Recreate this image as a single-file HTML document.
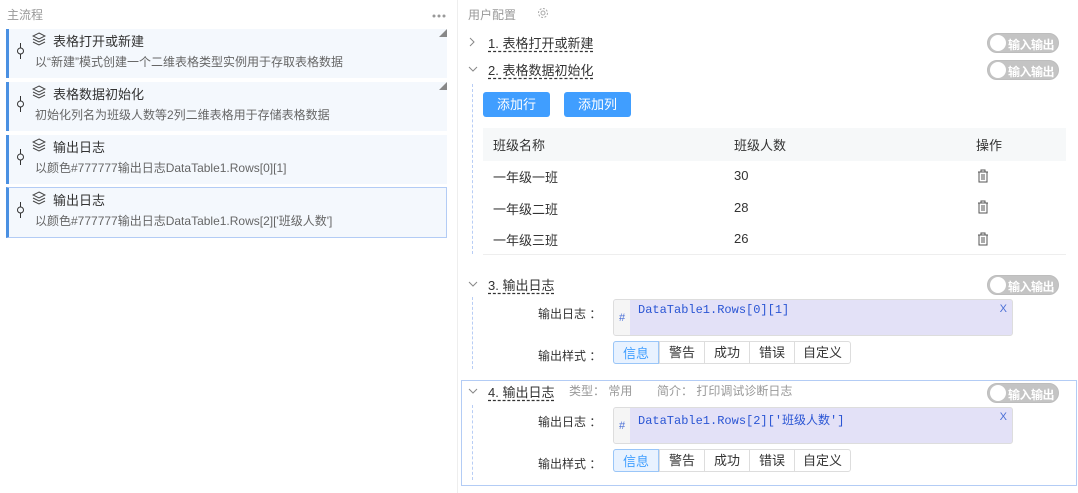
<!DOCTYPE html>
<html><head><meta charset="utf-8"><style>
*{box-sizing:border-box;margin:0;padding:0}
body{width:1078px;height:493px;background:#fff;font-family:"Liberation Sans","Noto Sans CJK SC",sans-serif;font-size:12px;color:#333;position:relative;overflow:hidden}
.a{position:absolute;white-space:nowrap}
.card{position:absolute;left:6px;width:441px;background:#f4f8fd;border-left:3px solid #4a90e2}
.card .t{position:absolute;left:44px;top:2px;font-size:13px;color:#333}
.card .d{position:absolute;left:26px;top:24px;font-size:12px;color:#666}
.card .ic{position:absolute;left:23px;top:3px}
.card .pin{position:absolute;left:7px;top:14px;width:9px;height:16px}
.tri{position:absolute;right:0;top:0;width:0;height:0;border-left:8px solid transparent;border-top:8px solid #888;transform:scaleY(-1)}
.step{position:absolute;left:488px;font-size:13px;color:#333;text-decoration:underline dashed;text-underline-offset:3px}
.chev{position:absolute;left:468px}
.tog{position:absolute;left:987px;width:72px;height:20px;border-radius:10px;background:#c4c4c4;border:1px solid #bdbdbd}
.tog:before{content:"";position:absolute;left:2px;top:1px;width:16px;height:16px;border-radius:50%;background:#fff}
.tog span{position:absolute;left:20px;top:2px;color:#fff;font-size:12px;font-weight:bold;letter-spacing:-0.5px}
.btn{position:absolute;top:92px;width:67px;height:25px;background:#409eff;color:#fff;border-radius:3px;text-align:center;line-height:25px;font-size:13px}
.lbl{position:absolute;left:538px;font-size:12px;color:#333}
.ta{position:absolute;left:613px;width:400px;height:37px;border:1px solid #ddd;border-radius:3px;background:#e3e1f7;overflow:hidden}
.ta .h{position:absolute;left:0;top:0;width:16px;height:100%;background:#f5f5f5;color:#4a6fd6;font-size:11px;text-align:center;padding-top:12px}
.ta .c{position:absolute;left:24px;top:3px;font-family:"Liberation Mono","Noto Sans CJK SC",monospace;color:#2a55d4;font-size:12px}
.ta .x{position:absolute;right:5px;top:3px;color:#4a6fd6;font-size:11px}
.seg{position:absolute;left:613px;height:23px;display:flex;border:1px solid #ddd;border-radius:3px;background:#fff}
.seg div{height:21px;line-height:21px;text-align:center;font-size:13px;color:#333;border-left:1px solid #ddd}
.seg div:first-child{border-left:none;background:#e8f2ff;color:#409eff;border:1px solid #9ac6f8;margin:-1px 0 -1px -1px;height:23px;line-height:23px;border-radius:3px 0 0 3px}
.dash{position:absolute;left:472px;border-left:1px dashed #b8cdf5}
</style></head><body>
<div class="a" style="left:7px;top:6px;color:#999;font-size:12px">主流程</div>
<svg class="a" style="left:432px;top:14px" width="14" height="4"><circle cx="2" cy="2" r="1.5" fill="#999"/><circle cx="7" cy="2" r="1.5" fill="#999"/><circle cx="12" cy="2" r="1.5" fill="#999"/></svg>
<div class="a" style="left:457px;top:0;width:1px;height:493px;background:#eee"></div>

<div class="card" style="top:29px;height:49px"><div class="tri"></div>
<svg class="pin" viewBox="0 0 9 16"><path d="M4.5 0v5M4.5 11v5" stroke="#333"/><circle cx="4.5" cy="8" r="3" fill="none" stroke="#333"/></svg>
<svg class="ic" width="14" height="14" viewBox="0 0 14 14" fill="none" stroke="#444"><path d="M7 1L13 4 7 7 1 4Z M1 7l6 3 6-3 M1 10l6 3 6-3"/></svg>
<div class="t">表格打开或新建</div><div class="d">以“新建”模式创建一个二维表格类型实例用于存取表格数据</div></div>
<div class="card" style="top:82px;height:49px"><div class="tri"></div>
<svg class="pin" viewBox="0 0 9 16"><path d="M4.5 0v5M4.5 11v5" stroke="#333"/><circle cx="4.5" cy="8" r="3" fill="none" stroke="#333"/></svg>
<svg class="ic" width="14" height="14" viewBox="0 0 14 14" fill="none" stroke="#444"><path d="M7 1L13 4 7 7 1 4Z M1 7l6 3 6-3 M1 10l6 3 6-3"/></svg>
<div class="t">表格数据初始化</div><div class="d">初始化列名为班级人数等2列二维表格用于存储表格数据</div></div>
<div class="card" style="top:135px;height:49px">
<svg class="pin" viewBox="0 0 9 16"><path d="M4.5 0v5M4.5 11v5" stroke="#333"/><circle cx="4.5" cy="8" r="3" fill="none" stroke="#333"/></svg>
<svg class="ic" width="14" height="14" viewBox="0 0 14 14" fill="none" stroke="#444"><path d="M7 1L13 4 7 7 1 4Z M1 7l6 3 6-3 M1 10l6 3 6-3"/></svg>
<div class="t">输出日志</div><div class="d">以颜色#777777输出日志DataTable1.Rows[0][1]</div></div>
<div class="card" style="top:187px;height:51px;border:1px solid #b3ccf5;border-left:3px solid #4a90e2">
<svg class="pin" viewBox="0 0 9 16"><path d="M4.5 0v5M4.5 11v5" stroke="#333"/><circle cx="4.5" cy="8" r="3" fill="none" stroke="#333"/></svg>
<svg class="ic" width="14" height="14" viewBox="0 0 14 14" fill="none" stroke="#444"><path d="M7 1L13 4 7 7 1 4Z M1 7l6 3 6-3 M1 10l6 3 6-3"/></svg>
<div class="t">输出日志</div><div class="d">以颜色#777777输出日志DataTable1.Rows[2]['班级人数']</div></div>

<div class="a" style="left:468px;top:6px;color:#999">用户配置</div>
<svg class="a" style="left:537px;top:7px" width="12" height="12" viewBox="0 0 12 12" fill="none" stroke="#aaa"><circle cx="6" cy="6" r="2"/><circle cx="6" cy="6" r="4.5" stroke-dasharray="2 1.5"/></svg>

<svg class="chev" style="top:37px" width="8" height="10"><path d="M2 1l4 4-4 4" fill="none" stroke="#888"/></svg>
<div class="step a" style="top:33px">1. 表格打开或新建</div>
<div class="tog" style="top:33px"><span>输入输出</span></div>
<svg class="chev" style="top:65px" width="10" height="8"><path d="M1 2l4 4 4-4" fill="none" stroke="#888"/></svg>
<div class="step a" style="top:60px">2. 表格数据初始化</div>
<div class="tog" style="top:60px"><span>输入输出</span></div>
<div class="dash" style="top:84px;height:170px"></div>
<div class="btn" style="left:483px">添加行</div><div class="btn" style="left:564px">添加列</div>
<div class="a" style="left:483px;top:128px;width:583px;height:33px;background:#f6f8f9"></div>
<div class="a" style="left:493px;top:135px;font-size:13px">班级名称</div>
<div class="a" style="left:734px;top:135px;font-size:13px">班级人数</div>
<div class="a" style="left:976px;top:135px;font-size:13px">操作</div>
<div class="a" style="left:493px;top:167px;font-size:13px">一年级一班</div><div class="a" style="left:734px;top:168px;font-size:13px">30</div>
<div class="a" style="left:493px;top:199px;font-size:13px">一年级二班</div><div class="a" style="left:734px;top:200px;font-size:13px">28</div>
<div class="a" style="left:493px;top:230px;font-size:13px">一年级三班</div><div class="a" style="left:734px;top:231px;font-size:13px">26</div>
<svg class="a" style="left:977px;top:169px" width="12" height="14" viewBox="0 0 12 14" fill="none" stroke="#555"><path d="M1 3h10M4 3V1h4v2M2 3v10h8V3M5 5v6M7 5v6"/></svg>
<svg class="a" style="left:977px;top:200px" width="12" height="14" viewBox="0 0 12 14" fill="none" stroke="#555"><path d="M1 3h10M4 3V1h4v2M2 3v10h8V3M5 5v6M7 5v6"/></svg>
<svg class="a" style="left:977px;top:232px" width="12" height="14" viewBox="0 0 12 14" fill="none" stroke="#555"><path d="M1 3h10M4 3V1h4v2M2 3v10h8V3M5 5v6M7 5v6"/></svg>
<div class="a" style="left:483px;top:254px;width:583px;height:1px;background:#eee"></div>

<svg class="chev" style="top:280px" width="10" height="8"><path d="M1 2l4 4 4-4" fill="none" stroke="#888"/></svg>
<div class="step a" style="top:275px">3. 输出日志</div>
<div class="tog" style="top:275px"><span>输入输出</span></div>
<div class="dash" style="top:297px;height:72px"></div>
<div class="lbl" style="top:305px">输出日志 ：</div>
<div class="ta" style="top:299px"><div class="h">#</div><div class="c">DataTable1.Rows[0][1]</div><div class="x">X</div></div>
<div class="lbl" style="top:347px">输出样式 ：</div>
<div class="seg" style="top:341px"><div style="width:46px">信息</div><div style="width:45px">警告</div><div style="width:45px">成功</div><div style="width:45px">错误</div><div style="width:56px">自定义</div></div>

<div class="a" style="left:461px;top:380px;width:616px;height:106px;border:1px solid #b3ccf5"></div>
<svg class="chev" style="top:387px" width="10" height="8"><path d="M1 2l4 4 4-4" fill="none" stroke="#888"/></svg>
<div class="step a" style="top:382px">4. 输出日志</div>
<div class="a" style="left:569px;top:382px;color:#999;font-size:12px">类型： 常用</div>
<div class="a" style="left:657px;top:382px;color:#999;font-size:12px">简介： 打印调试诊断日志</div>
<div class="tog" style="top:383px"><span>输入输出</span></div>
<div class="dash" style="top:405px;height:75px"></div>
<div class="lbl" style="top:413px">输出日志 ：</div>
<div class="ta" style="top:407px"><div class="h">#</div><div class="c">DataTable1.Rows[2]['班级人数']</div><div class="x">X</div></div>
<div class="lbl" style="top:455px">输出样式 ：</div>
<div class="seg" style="top:449px"><div style="width:46px">信息</div><div style="width:45px">警告</div><div style="width:45px">成功</div><div style="width:45px">错误</div><div style="width:56px">自定义</div></div>
</body></html>
